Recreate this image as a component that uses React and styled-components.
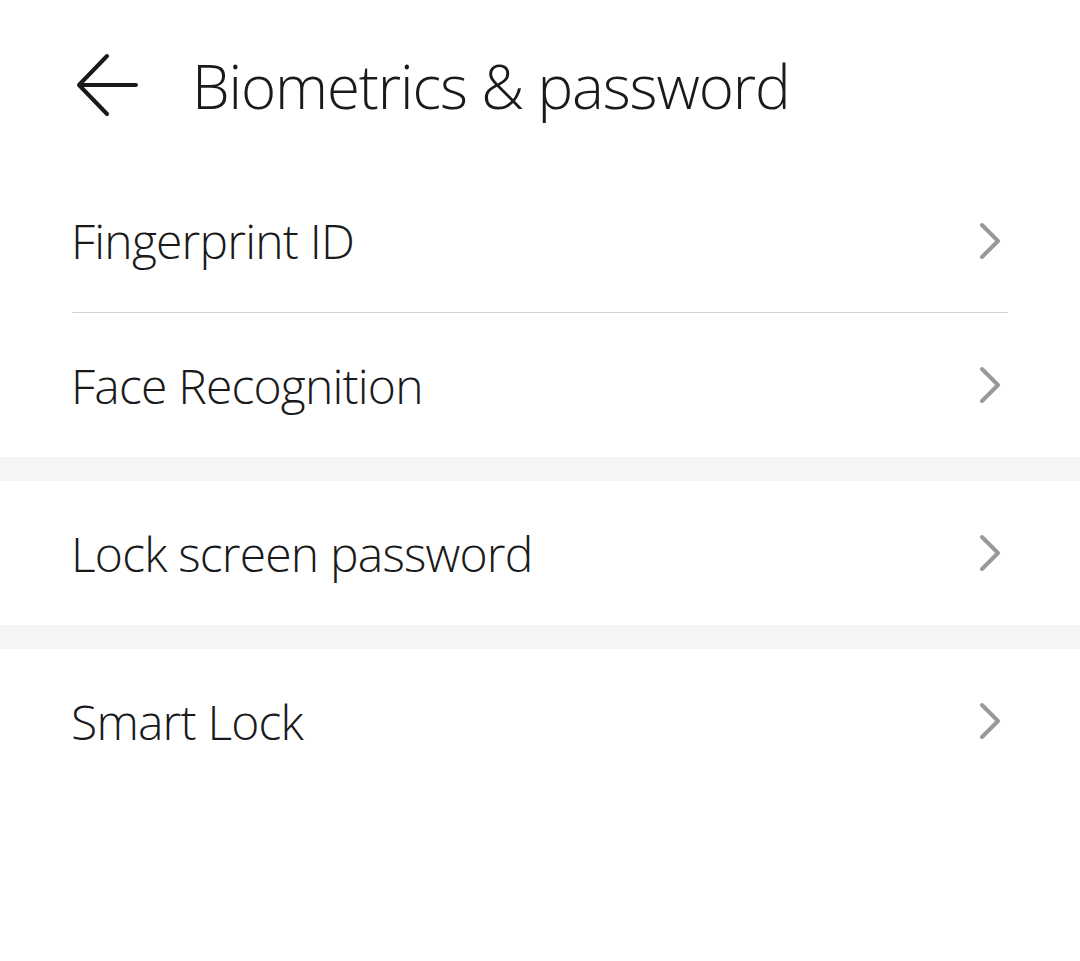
import React from "react";
import styled, { createGlobalStyle } from "styled-components";

const Global = createGlobalStyle`
  html, body { margin: 0; padding: 0; background: #ffffff; }
  body { font-family: "Open Sans", "Noto Sans", sans-serif; }
`;

const Page = styled.div`
  width: 1080px;
  min-height: 961px;
  background: #ffffff;
  color: #1a1a1a;
`;

const Header = styled.header`
  height: 169px;
  display: flex;
  align-items: flex-start;
  padding: 52px 0 0 76px;
  box-sizing: border-box;
  gap: 52px;
`;

const BackButton = styled.button`
  border: 0;
  background: none;
  padding: 0;
  width: 64px;
  height: 66px;
  display: flex;
  align-items: center;
  justify-content: center;
  cursor: pointer;
`;

const Title = styled.h1`
  margin: 0;
  font-weight: 300;
  font-size: 60px;
  line-height: 68px;
  letter-spacing: -1.1px;
  color: #1a1a1a;
`;

const Group = styled.section`
  background: #ffffff;
`;

const Spacer = styled.div`
  height: 24px;
  background: #f5f5f5;
`;

const Row = styled.div`
  height: 144px;
  margin: 0 72px;
  display: flex;
  align-items: center;
  justify-content: space-between;
  box-sizing: border-box;
  border-bottom: ${(p) => (p.$divider ? "1px solid #d2d2d2" : "none")};
`;

const Label = styled.span`
  font-weight: 300;
  font-size: 48px;
  letter-spacing: -0.8px;
  color: #1a1a1a;
  margin-left: -1px;
`;

const ChevronWrap = styled.span`
  display: flex;
  margin-right: 5px;
`;

const Chevron = () => (
  <svg width="30" height="40" viewBox="0 0 30 40" fill="none">
    <path d="M9 4 L25 20 L9 36" stroke="#999999" strokeWidth="4" strokeLinecap="round" strokeLinejoin="round" />
  </svg>
);

const BackArrow = () => (
  <svg width="64" height="66" viewBox="0 0 64 66" fill="none">
    <path d="M60 33 H4 M31 4 L3 33 L31 62" stroke="#1a1a1a" strokeWidth="4" strokeLinecap="round" strokeLinejoin="round" />
  </svg>
);

const Item = ({ label, divider }) => (
  <Row $divider={divider}>
    <Label>{label}</Label>
    <ChevronWrap><Chevron /></ChevronWrap>
  </Row>
);

export default function App() {
  return (
    <Page>
      <Global />
      <Header>
        <BackButton aria-label="Back"><BackArrow /></BackButton>
        <Title>Biometrics &amp; password</Title>
      </Header>
      <Group>
        <Item label="Fingerprint ID" divider />
        <Item label="Face Recognition" />
      </Group>
      <Spacer />
      <Group>
        <Item label="Lock screen password" />
      </Group>
      <Spacer />
      <Group>
        <Item label="Smart Lock" />
      </Group>
    </Page>
  );
}
